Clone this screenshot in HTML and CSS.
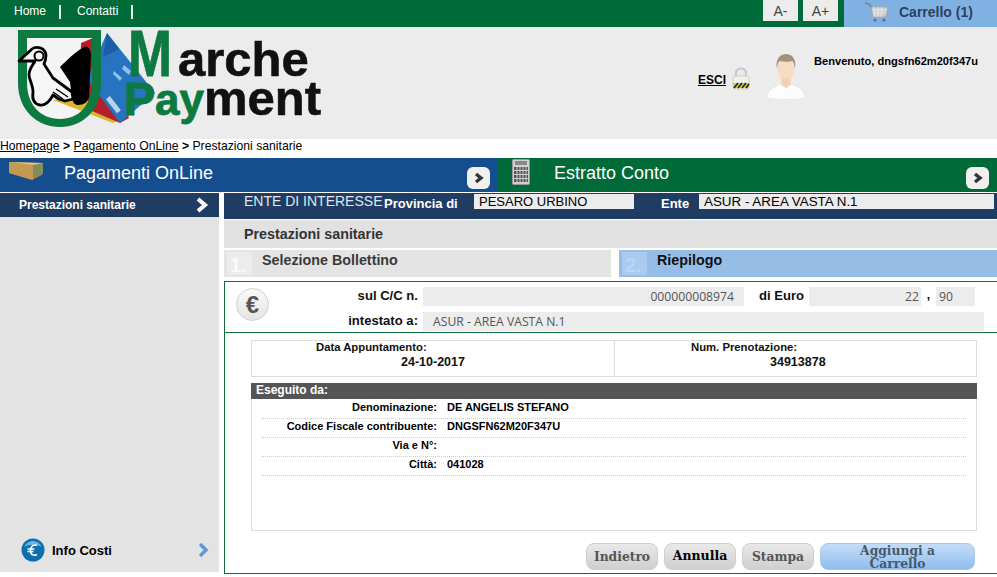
FILE: index.html
```html
<!DOCTYPE html>
<html>
<head>
  <title>Marche Payment</title>
  <link rel="stylesheet" href="styles.css">
</head>
<body>
  <div class="topbar">
    <div class="topnav">
      <a class="topnav-link">Home</a><span class="topnav-sep"></span>
      <a class="topnav-link">Contatti</a><span class="topnav-sep"></span>
    </div>
    <div class="topbar-right">
      <button class="font-button">A-</button>
      <button class="font-button">A+</button>
      <div class="cart">
        <svg class="cart-icon" width="26" height="22" viewBox="0 0 26 22">
          <path d="M1 2l4 1 3 4" fill="none" stroke="#7a8087" stroke-width="1.5"/>
          <path d="M7 6h17l-2 10H9z" fill="#c9ccc9" stroke="#a6aaa8" stroke-width="1"/>
          <path d="M10 6l1 10M14 6v10M18 6l-1 10M8 9h15M9 12h13" stroke="#e8e8e8" stroke-width="1"/>
          <circle cx="11" cy="19" r="1.6" fill="#687078"/>
          <circle cx="20" cy="19" r="1.6" fill="#687078"/>
        </svg>
        <span class="cart-label">Carrello (1)</span>
      </div>
    </div>
  </div>

  <div class="header">
    <svg class="logo" width="320" height="102" viewBox="0 0 320 102">
      <path d="M8 6h73v48c0 25-15 40-37 40S8 79 8 54z" fill="#f4f4f4"/>
      <path d="M38 71l50-11 18 30-8 4z" fill="#dcb52c"/>
      <path d="M66 14l12-5 36 80-9 5-28-12-12-30z" fill="#b3202a"/>
      <path d="M92 4l48 60-35 30-33-44z" fill="#2673bf"/>
      <path d="M92 4l12 16-16 8z" fill="#1b5ea8"/>
      <path d="M109 36l7 6-2 4-7-6zM99 42l8 7-2 3-7-7z" fill="#8fc0ea"/>
      <rect x="96" y="67" width="5" height="18" fill="#b9d3ec" transform="rotate(-38 98 76)"/>
      <path d="M3 1h83v53c0 27-18 44-41 44S3 81 3 54zM12 9v45c0 22 14 36 33 36s32-14 32-36V9z" fill="#0d7a42" fill-rule="evenodd"/>
      <path d="M69 18c-9 5-17 13-24 20l10 15 2 16c1 5 3 7 6 7 6 0 10-3 11-8l2-42c0-5-3-10-7-8z" fill="#000"/>
      <path d="M4 32l13-12c4-3 13-2 14 6 0 4-1 7-2 9l9 14 19 14 1 7-8 2-6-2-6-4c-3 6-8 11-13 10-6-1-8-6-7-13 0-7-4-13-4-17 0-6 4-10 6-14z" fill="#f6f6f6" stroke="#000" stroke-width="2.800" stroke-linejoin="round"/>
      <circle cx="24" cy="27" r="4.500" fill="#f6f6f6" stroke="#000" stroke-width="2"/>
      <path d="M41 60l12 8M38 63l10 7" stroke="#000" stroke-width="1.500"/>
      <text class="logo-green logo-m" x="113" y="47" textLength="44" lengthAdjust="spacingAndGlyphs">M</text>
      <text class="logo-black logo-word" x="163" y="47">arche</text>
      <text class="logo-green logo-p" x="109" y="86">P</text>
      <text class="logo-green logo-ay" x="140" y="86">ay</text>
      <text class="logo-black logo-word" x="189" y="86">ment</text>
    </svg>
    <div class="user">
      <a class="logout">ESCI</a>
      <svg class="lock" width="20" height="24" viewBox="0 0 20 24">
        <path d="M5 11V7c0-6 10-6 10 0v4" fill="none" stroke="#c6c9c9" stroke-width="2.200"/>
        <rect x="2" y="10" width="16" height="13" rx="2" fill="#f0f0ea" stroke="#d0d0c8"/>
        <path d="M2 17h16v5H2z" fill="#d8cc3a"/>
        <path d="M3 22l4-5M7 22l4-5M11 22l4-5M15 22l3-4" stroke="#222" stroke-width="1.600"/>
      </svg>
      <svg class="avatar" width="40" height="46" viewBox="0 0 40 46">
        <path d="M1 44c0-9 9-12 13-14l6 4 6-4c4 2 13 5 13 14-10 2-28 2-38 0z" fill="#fdfdfd" stroke="#e6e8e8"/>
        <ellipse cx="20" cy="15" rx="8" ry="13" fill="#f6dcc0"/>
        <path d="M15 30l5 4 5-4-1-6h-8z" fill="#f1d3b4"/>
        <path d="M11 15C9 4 15 0 20 0s11 4 9 15c-1-5-1-7-3-8-3 1-8 1-12 0-2 1-2 3-3 8z" fill="#a3927a"/>
      </svg>
      <div class="welcome">Benvenuto, dngsfn62m20f347u</div>
    </div>
  </div>

  <div class="breadcrumb">
    <a>Homepage</a> <b>&gt;</b> <a>Pagamento OnLine</a> <b>&gt;</b> Prestazioni sanitarie
  </div>

  <div class="sections">
    <div class="section section-blue">
      <svg class="section-icon" width="36" height="21" viewBox="0 0 36 21">
        <path d="M0 2l34 1-1 12-10 5L0 13z" fill="#a8803c"/>
        <path d="M0 2l24 3v15L0 13z" fill="#c49a52"/>
        <path d="M0 2l34 1-10 2z" fill="#e0c48c"/>
        <path d="M24 6l10-2v10l-10 2z" fill="#7f8f5c"/>
      </svg>
      <span class="section-title">Pagamenti OnLine</span>
      <span class="go-button"><svg width="12" height="12" viewBox="0 0 12 12"><path d="M3 2l5 4-5 4" fill="none" stroke="#333" stroke-width="3.400"/></svg></span>
    </div>
    <div class="section section-green">
      <svg class="section-icon calc" width="18" height="26" viewBox="0 0 18 26">
        <rect x="0.500" y="0.500" width="17" height="25" rx="1" fill="#d0d0d0" stroke="#999"/>
        <rect x="3" y="2" width="12" height="4" fill="#888"/>
        <path d="M2 8h14v3H2zM2 12h14v3H2zM2 16h14v3H2zM2 20h14v3H2z" fill="#555"/>
        <path d="M5 7v17M8 7v17M11 7v17M14 7v17" stroke="#d0d0d0"/>
      </svg>
      <span class="section-title">Estratto Conto</span>
      <span class="go-button"><svg width="12" height="12" viewBox="0 0 12 12"><path d="M3 2l5 4-5 4" fill="none" stroke="#333" stroke-width="3.400"/></svg></span>
    </div>
  </div>

  <div class="page">
    <div class="sidebar">
      <div class="side-item">
        <span>Prestazioni sanitarie</span>
        <svg width="14" height="16" viewBox="0 0 14 16"><path d="M3 2l7 6-7 6" fill="none" stroke="#fff" stroke-width="4"/></svg>
      </div>
      <div class="info-costi">
        <svg class="info-icon" width="24" height="24" viewBox="0 0 24 24">
          <circle cx="12" cy="12" r="11.500" fill="#0d6eb0"/>
          <path d="M3 9c4-8 14-8 18 0-5-3-13-3-18 0z" fill="#6cb4e4"/>
          <path d="M16 7.500c-3-1.500-6 0-6.500 4.500s3 6.500 6.500 4.500M6.500 11h7M6.500 13.500h6" fill="none" stroke="#fff" stroke-width="1.500"/>
        </svg>
        <span class="info-label">Info Costi</span>
        <svg width="12" height="14" viewBox="0 0 12 14"><path d="M2 1l6 6-6 6" fill="none" stroke="#5d9bd5" stroke-width="3.500"/></svg>
      </div>
    </div>

    <div class="main">
      <div class="ente-bar">
        <span class="ente-title">ENTE DI INTERESSE</span>
        <span class="ente-label prov-label">Provincia di</span>
        <span class="ente-value prov-value">PESARO URBINO</span>
        <span class="ente-label ente-label-2">Ente</span>
        <span class="ente-value ente-value-2">ASUR - AREA VASTA N.1</span>
      </div>
      <div class="main-title">Prestazioni sanitarie</div>
      <div class="steps">
        <div class="step">
          <span class="step-num">1.</span>
          <span class="step-label">Selezione Bollettino</span>
        </div>
        <div class="step step-active">
          <span class="step-num">2.</span>
          <span class="step-label">Riepilogo</span>
        </div>
      </div>

      <div class="panel">
        <div class="summary">
          <div class="euro-coin">€</div>
          <div class="summary-rows">
            <div class="summary-row">
              <span class="summary-label">sul C/C n.</span>
              <span class="field field-cc">000000008974</span>
              <span class="summary-label euro-label">di Euro</span>
              <span class="field field-euro">22</span>
              <span class="comma">,</span>
              <span class="field field-cents">90</span>
            </div>
            <div class="summary-row">
              <span class="summary-label">intestato a:</span>
              <span class="field field-name">ASUR - AREA VASTA N.1</span>
            </div>
          </div>
        </div>

        <div class="body">
          <div class="info-box">
            <div class="info-cell info-left">
              <div class="info-key">Data Appuntamento:</div>
              <div class="info-value">24-10-2017</div>
            </div>
            <div class="info-cell info-right">
              <div class="info-key">Num. Prenotazione:</div>
              <div class="info-value">34913878</div>
            </div>
          </div>

          <div class="payer">
            <div class="payer-head">Eseguito da:</div>
            <div class="payer-row"><span class="payer-key">Denominazione:</span><span>DE ANGELIS STEFANO</span></div>
            <div class="payer-row"><span class="payer-key">Codice Fiscale contribuente:</span><span>DNGSFN62M20F347U</span></div>
            <div class="payer-row"><span class="payer-key">Via e N°:</span><span></span></div>
            <div class="payer-row"><span class="payer-key">Città:</span><span>041028</span></div>
          </div>

          <div class="actions">
            <button class="btn btn-muted">Indietro</button>
            <button class="btn btn-cancel">Annulla</button>
            <button class="btn btn-muted">Stampa</button>
            <button class="btn btn-add">Aggiungi a Carrello</button>
          </div>
        </div>
      </div>
    </div>
  </div>
</body>
</html>
```

FILE: styles.css
```css
* {
  box-sizing: border-box;
}

html,
body {
  height: 577px;
  overflow: hidden;
}

body {
  margin: 0;
  background: #fff;
  color: #000;
  font-family: "Liberation Sans", Arial, sans-serif;
  font-size: 12px;
}

a {
  color: inherit;
}

.topbar {
  display: flex;
  justify-content: space-between;
  height: 27px;
  background: #006b38;
}

.topnav {
  display: flex;
  align-items: flex-start;
  padding: 4px 0 0 14px;
  color: #fff;
}

.topnav-link {
  font-size: 12px;
  line-height: 14px;
}

.topnav-sep {
  width: 2px;
  height: 14px;
  margin: 1px 16px 0 13px;
  background: #e6fff0;
}

.topbar-right {
  display: flex;
  align-items: flex-start;
}

.font-button {
  width: 35px;
  height: 21px;
  margin-right: 5px;
  padding: 0;
  border: none;
  background: #ececec;
  color: #444;
  font-family: inherit;
  font-size: 14px;
}

.cart {
  display: flex;
  align-items: center;
  width: 153px;
  height: 27px;
  margin-left: 1px;
  padding: 0 0 3px 20px;
  background: #7fb2e3;
}

.cart-icon {
  margin-right: 9px;
}

.cart-label {
  color: #2f3f5c;
  font-size: 14px;
  font-weight: bold;
}

.header {
  display: flex;
  justify-content: space-between;
  height: 112px;
  background: #ececec;
}

.logo {
  margin: 2px 0 0 15px;
}

.logo text {
  font-family: "Liberation Sans", Arial, sans-serif;
  font-weight: bold;
}

.logo-green {
  fill: #0d7a42;
  stroke: #0d7a42;
  stroke-width: 0.800;
}

.logo-black {
  fill: #111;
  stroke: #111;
  stroke-width: 0.600;
}

.logo-m {
  font-size: 64px;
}

.logo-p {
  font-size: 47px;
}

.logo-ay {
  font-size: 44px;
}

.logo-word {
  font-size: 49px;
}

.user {
  display: flex;
  align-items: flex-start;
  width: 299px;
}

.logout {
  margin-top: 46px;
  font-weight: bold;
  text-decoration: underline;
}

.lock {
  margin: 39px 0 0 5px;
}

.avatar {
  margin: 27px 0 0 15px;
}

.welcome {
  margin: 28px 0 0 8px;
  font-size: 11.100px;
  font-weight: bold;
  white-space: nowrap;
}

.breadcrumb {
  height: 19px;
  font-size: 12.200px;
  line-height: 14px;
}

.breadcrumb a {
  text-decoration: underline;
}

.sections {
  display: flex;
  height: 34px;
}

.section {
  position: relative;
  display: flex;
  align-items: flex-start;
  color: #fff;
}

.section-blue {
  width: 498px;
  background: #154e8f;
}

.section-green {
  flex: 1;
  background: #006b38;
}

.section-icon {
  position: absolute;
  top: 2px;
  left: 9px;
}

.calc {
  top: 1px;
  left: 14px;
}

.section-title {
  position: relative;
  margin: 4px 0 0 64px;
  font-size: 18px;
  line-height: 22px;
}

.section-green .section-title {
  margin-left: 56px;
}

.go-button {
  position: absolute;
  top: 9px;
  right: 8px;
  display: flex;
  align-items: center;
  justify-content: center;
  width: 23px;
  height: 22px;
  border-radius: 6px;
  background: #f1f0ee;
}

.page {
  display: flex;
  height: 385px;
  padding-top: 1px;
}

.sidebar {
  display: flex;
  flex: none;
  flex-direction: column;
  justify-content: space-between;
  width: 219px;
  height: 379px;
  background: #e3e3e3;
}

.side-item {
  display: flex;
  align-items: center;
  justify-content: space-between;
  height: 24px;
  padding: 0 10px 0 19px;
  background: #1f3d63;
  color: #fff;
  font-weight: bold;
}

.info-costi {
  display: flex;
  align-items: center;
  height: 44px;
  padding: 0 9px 0 21px;
}

.info-label {
  flex: 1;
  margin-left: 7px;
  font-size: 13px;
  font-weight: bold;
}

.main {
  flex: 1;
  min-width: 0;
  margin-left: 5px;
}

.ente-bar {
  display: flex;
  align-items: flex-start;
  height: 26px;
  background: #1f3d63;
  color: #fff;
}

.ente-title {
  width: 140px;
  margin-left: 20px;
  font-size: 14px;
  line-height: 16px;
  color: #dfe6ee;
  white-space: nowrap;
}

.ente-label {
  margin-top: 3px;
  font-size: 13px;
  font-weight: bold;
  line-height: 15px;
}

.prov-label {
  width: 90px;
}

.ente-value {
  height: 15px;
  margin-top: 1px;
  padding-left: 5px;
  background: #ececec;
  color: #000;
  font-size: 13px;
  line-height: 15px;
}

.prov-value {
  width: 160px;
}

.ente-label-2 {
  width: 38px;
  margin-left: 27px;
}

.ente-value-2 {
  width: 295px;
  font-size: 13.400px;
}

.main-title {
  height: 28px;
  margin-top: 1px;
  padding-left: 20px;
  background: #e1e1e1;
  color: #333;
  font-size: 14.300px;
  font-weight: bold;
  line-height: 28px;
}

.steps {
  display: flex;
  gap: 8px;
  height: 27px;
  margin-top: 2px;
}

.step {
  display: flex;
  width: 387px;
  background: #e4e4e4;
  border-bottom: 1px solid #dfeae4;
}

.step-active {
  flex: 1;
  background: #96bde6;
  border-bottom: none;
}

.step-num {
  width: 25px;
  height: 23px;
  margin: 2px 0 0 3px;
  padding: 3px 0 0 3px;
  background: #ececec;
  color: #fafafa;
  font-size: 20px;
  font-weight: bold;
  line-height: 20px;
}

.step-active .step-num {
  background: #a9cbef;
  color: #bcd5f1;
}

.step-label {
  margin-left: 10px;
  color: #3a3a3a;
  font-size: 14.300px;
  font-weight: bold;
  line-height: 20px;
}

.step-active .step-label {
  color: #111;
}

.panel {
  height: 293px;
  margin-top: 4px;
  border: 1px solid #0d6b3c;
  border-right: none;
}

.summary {
  display: flex;
  height: 51px;
  border-bottom: 1px solid #0d6b3c;
}

.euro-coin {
  flex: none;
  width: 33px;
  height: 33px;
  margin: 6px 0 0 11px;
  border: 1px solid #cfcfcf;
  border-radius: 50%;
  background: linear-gradient(#fafafa, #e4e4e4);
  color: #555;
  font-size: 24px;
  font-weight: bold;
  line-height: 31px;
  text-align: center;
}

.summary-rows {
  display: flex;
  flex-direction: column;
  gap: 6px;
  padding-top: 5px;
}

.summary-row {
  display: flex;
  align-items: flex-start;
  height: 19px;
}

.summary-label {
  width: 154px;
  padding: 1px 5px 0 0;
  color: #111;
  font-size: 13.100px;
  font-weight: bold;
  line-height: 16px;
  text-align: right;
}

.field {
  height: 19px;
  background: #ececec;
  color: #555;
  font-family: "Open Sans", sans-serif;
  font-size: 12.200px;
  line-height: 20px;
}

.field-cc {
  width: 321px;
  padding-right: 10px;
  text-align: right;
}

.euro-label {
  width: 65px;
}

.field-euro {
  width: 112px;
  padding-right: 2px;
  text-align: right;
}

.comma {
  width: 15px;
  font-weight: bold;
  line-height: 16px;
  text-align: center;
}

.field-cents {
  width: 39px;
  padding-left: 3px;
}

.field-name {
  width: 561px;
  padding-left: 10px;
}

.body {
  padding: 7px 20px 0 26px;
}

.info-box {
  display: flex;
  height: 37px;
  border: 1px solid #ddd;
}

.info-cell {
  color: #111;
  font-weight: bold;
}

.info-left {
  width: 363px;
  border-right: 1px solid #ddd;
}

.info-right {
  flex: 1;
}

.info-key {
  font-size: 11.300px;
  line-height: 13px;
}

.info-left .info-key {
  padding-left: 64px;
}

.info-right .info-key {
  padding-left: 76px;
}

.info-value {
  padding-top: 1px;
  font-size: 12.500px;
  line-height: 15px;
}

.info-left .info-value {
  padding-left: 149px;
}

.info-right .info-value {
  padding-left: 155px;
}

.payer {
  height: 148px;
  margin-top: 6px;
  border: 1px solid #ddd;
  border-top: none;
}

.payer-head {
  height: 16px;
  margin: 0 -1px 1px;
  padding-left: 5px;
  background: #555;
  color: #fff;
  font-weight: bold;
  line-height: 15px;
}

.payer-row {
  display: flex;
  gap: 10px;
  height: 19px;
  margin: 0 10px;
  border-bottom: 1px dotted #ccc;
  font-size: 11px;
  font-weight: bold;
  line-height: 14px;
}

.payer-key {
  width: 175px;
  text-align: right;
  white-space: nowrap;
}

.actions {
  display: flex;
  gap: 6px;
  margin: 12px 0 0 335px;
}

.btn {
  flex: none;
  height: 27px;
  padding: 0;
  border: 1px solid #cfcfcf;
  border-radius: 8px;
  background: linear-gradient(#e9e9e9, #cfcfcf);
  font-family: "DejaVu Serif", serif;
  font-size: 12.300px;
  font-weight: bold;
  line-height: 13px;
}

.btn-muted {
  width: 72px;
  color: #555;
}

.btn-cancel {
  width: 72px;
  padding-bottom: 3px;
  color: #000;
  font-size: 12.500px;
}

.btn-add {
  width: 155px;
  padding: 0 30px;
  border-color: #a9c8ea;
  background: linear-gradient(#c5ddf7, #8fbdee);
  color: #46586c;
}
```
